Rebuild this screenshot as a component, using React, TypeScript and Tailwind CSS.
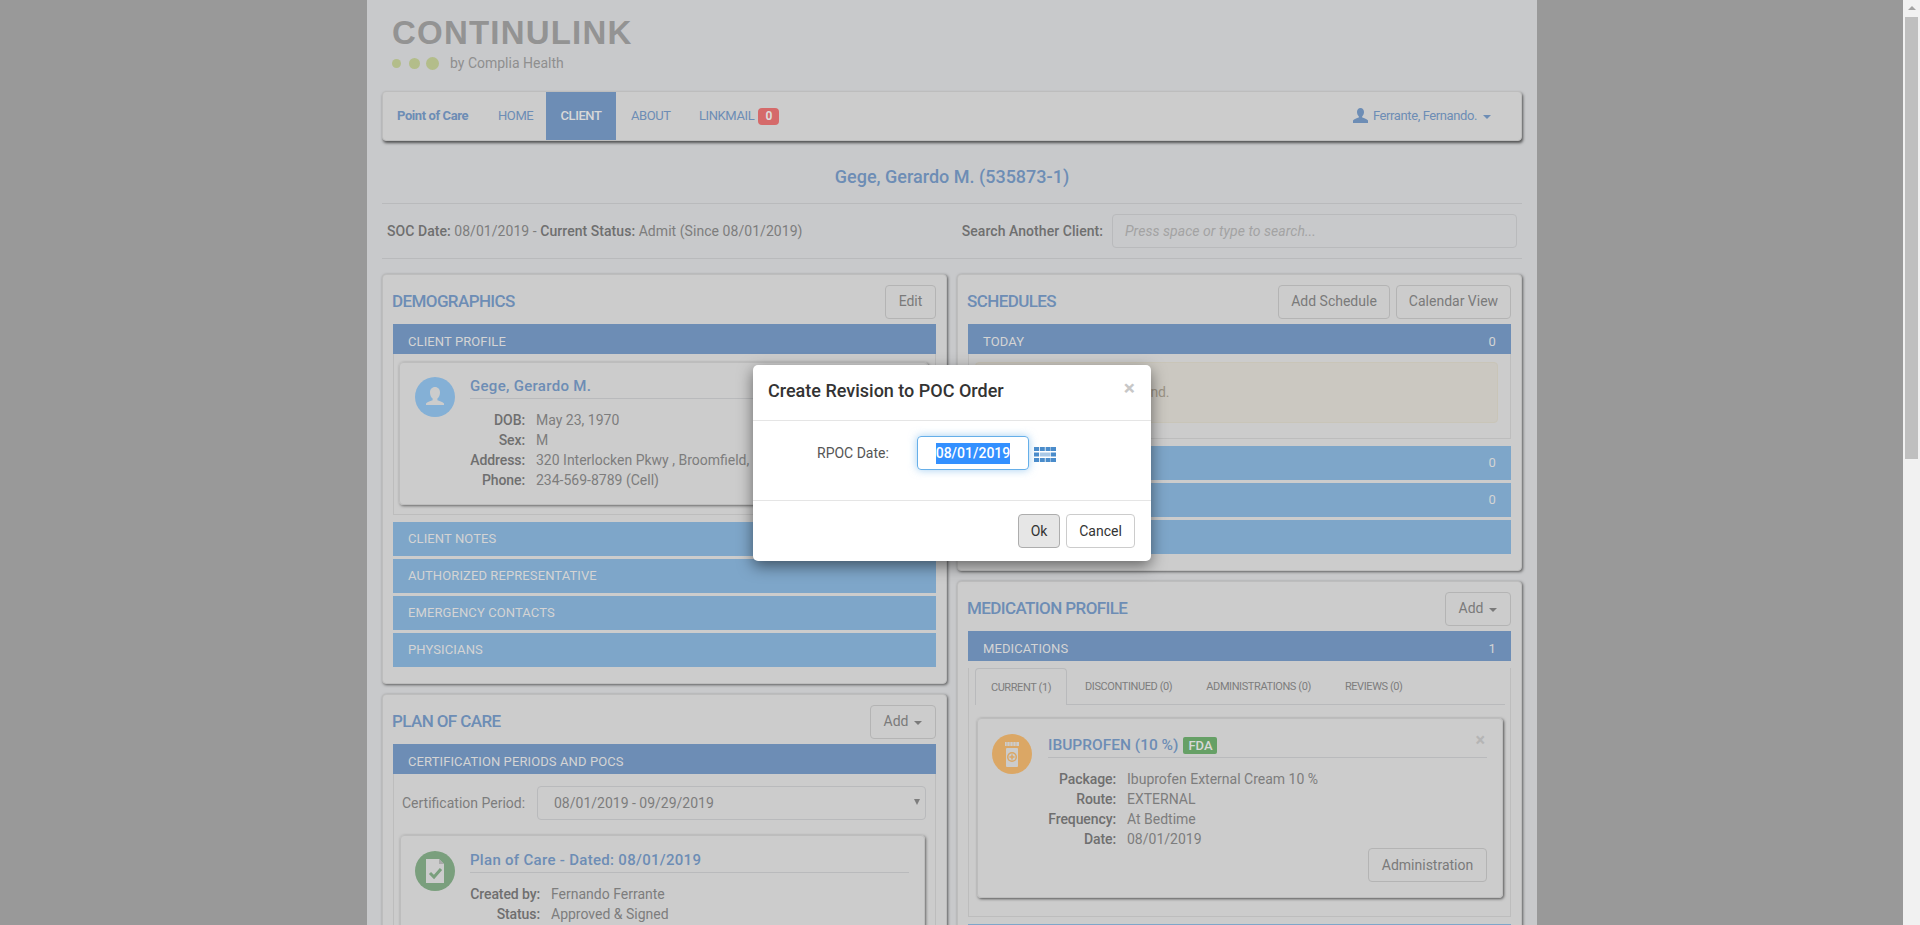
import type { ReactNode } from 'react';

const font = { fontFamily: 'Roboto, "Liberation Sans", sans-serif' };

function Panel({ title, actions, children, className = '' }: { title: string; actions: ReactNode; children: ReactNode; className?: string }) {
  return (
    <section className={`rounded-[4px] border border-[#bdbdbd] bg-[#cccccc] px-[10px] shadow-[1px_1px_3px_rgba(0,0,0,0.55)] ${className}`}>
      <div className="flex h-[49px] items-center justify-between pt-[4px]">
        <h2 className="-ml-px text-[17px] font-medium tracking-[-0.6px] text-[#6d8db5]">{title}</h2>
        <div className="flex gap-[6px]">{actions}</div>
      </div>
      {children}
    </section>
  );
}

function Btn({ children, caret, className = '' }: { children: ReactNode; caret?: boolean; className?: string }) {
  return (
    <div className={`flex h-[34px] items-center justify-center gap-[6px] rounded-[4px] border border-[#b4b4b4] text-[14px] text-[#7a7a7a] ${className}`}>
      {children}
      {caret && <span className="mt-[2px] h-0 w-0 border-x-[4px] border-t-[4px] border-x-transparent border-t-[#7a7a7a]" />}
    </div>
  );
}

function Bar({ label, count, light }: { label: string; count?: number; light?: boolean }) {
  return (
    <div className={`flex items-center justify-between px-[15px] text-[13px] tracking-[0.1px] text-[#d4d4d4] ${light ? 'h-[34px] bg-[#7ea6c9]' : 'h-[30px] bg-[#6d8db5] pt-[5px]'}`}>
      <span>{label}</span>
      {count !== undefined && <span>{count}</span>}
    </div>
  );
}

function Rows({ rows, labelWidth }: { rows: [string, string][]; labelWidth: string }) {
  return (
    <div className="mt-[11px] text-[14px] leading-[20px]">
      {rows.map(([k, v]) => (
        <div key={k} className="flex gap-[11px]">
          <span className={`${labelWidth} shrink-0 whitespace-nowrap text-right font-medium tracking-[-0.1px] text-[#6f6f6f]`}>{k}</span>
          <span className="whitespace-nowrap text-[#7d7d7d]">{v}</span>
        </div>
      ))}
    </div>
  );
}

function Circle({ color, children }: { color: string; children: ReactNode }) {
  return <div className={`flex h-[40px] w-[40px] shrink-0 items-center justify-center rounded-full ${color}`}>{children}</div>;
}

function CardTitle({ children }: { children: ReactNode }) {
  return <div className="h-[22px] border-b border-[#b9babc] text-[15px] font-medium leading-[18px] tracking-[0.3px] text-[#6d8db5]">{children}</div>;
}

export default function App() {
  return (
    <div className="flex h-screen overflow-hidden bg-[#999999]" style={font}>
      <div className="min-w-0 flex-1">
        <div className="ml-[367px] h-[925px] w-[1170px] overflow-hidden bg-[#c8c9cb] px-[15px]">
          {/* Logo */}
          <div className="h-[91px] pl-[10px] pt-[14px]">
            <div className="text-[33px] font-bold leading-[38px] tracking-[1.2px] text-[#939393]" style={{ fontFamily: '"Liberation Sans", Arial, sans-serif' }}>CONTINULINK</div>
            <div className="mt-[2px] flex h-[18px] items-center">
              <span className="h-[9px] w-[9px] rounded-full bg-[#b3bd8a]" />
              <span className="ml-[8px] h-[11px] w-[11px] rounded-full bg-[#b3bd8a]" />
              <span className="ml-[6px] h-[13px] w-[13px] rounded-full bg-[#b3bd8a]" />
              <span className="ml-[11px] text-[14px] leading-[18px] text-[#8f8f8f]">by Complia Health</span>
            </div>
          </div>

          {/* Nav */}
          <nav className="flex h-[50px] items-center rounded-[4px] border border-[#bdbdbd] bg-[#cccccc] pl-[14px] text-[13px] tracking-[-0.4px] text-[#6d8db5] shadow-[1px_2px_3px_rgba(0,0,0,0.6)]">
            <span className="w-[101px] font-bold">Point of Care</span>
            <span className="w-[48px]">HOME</span>
            <div className="flex h-full w-[70px] items-center justify-center bg-[#6d8db5] font-medium text-[#d8d8d8]">CLIENT</div>
            <span className="ml-[15px] w-[68px]">ABOUT</span>
            <span>LINKMAIL</span>
            <span className="ml-[4px] flex h-[17px] w-[21px] items-center justify-center rounded-[4px] bg-[#d56a6a] text-[12px] font-bold text-[#dcdcdc]">0</span>
            <div className="ml-auto mr-[30px] flex items-center">
              <svg width="15" height="16" viewBox="0 0 15 16" fill="#6d8db5" className="mr-[5px]">
                <path d="M7.500 0c2.200 0 3.500 1.700 3.500 4 0 1.800-.7 3.400-1.800 4.300v1.300c2 .7 4.800 1.500 5.800 2.800V15H0v-2.600c1-1.300 3.800-2.100 5.800-2.800V8.300C4.700 7.400 4 5.800 4 4c0-2.300 1.300-4 3.500-4z" />
              </svg>
              <span>Ferrante, Fernando.</span>
              <span className="ml-[6px] mt-[2px] h-0 w-0 border-x-[4px] border-t-[4px] border-x-transparent border-t-[#6d8db5]" />
            </div>
          </nav>

          {/* Client title */}
          <h1 className="flex h-[63px] items-center justify-center border-b border-[#b9babc] pt-[9px] text-[18px] font-medium text-[#6d8db5]">Gege, Gerardo M. (535873-1)</h1>
          <div className="flex h-[55px] items-center border-b border-[#b9babc] px-[5px] text-[14px] tracking-[0.05px] text-[#7d7d7d]">
            <span><b className="font-medium text-[#6f6f6f]">SOC Date:</b> 08/01/2019 - <b className="font-medium text-[#6f6f6f]">Current Status:</b> Admit (Since 08/01/2019)</span>
            <span className="ml-auto font-medium text-[#6f6f6f]">Search Another Client:</span>
            <div className="ml-[9px] flex h-[34px] w-[405px] items-center rounded-[4px] border border-[#b9babc] pl-[12px] text-[14px] italic text-[#a3a3a3]">Press space or type to search...</div>
          </div>

          <div className="mt-[15px] grid grid-cols-[565px_565px] gap-x-[10px]">
            {/* Left column */}
            <div className="flex flex-col gap-[10px]">
              <Panel title="DEMOGRAPHICS" actions={<Btn className="w-[51px]">Edit</Btn>}>
                <Bar label="CLIENT PROFILE" />
                <div className="h-[161px] border border-t-0 border-[#bdbdbd] pl-[5px] pr-[7px] pt-[8px]">
                  <div className="flex h-[143px] rounded-[4px] border border-[#bdbdbd] px-[15px] pt-[14px] shadow-[1px_1px_3px_rgba(0,0,0,0.5)]">
                    <Circle color="bg-[#84b0d6]">
                      <svg width="26" height="26" viewBox="0 0 26 26" fill="#cccccc">
                        <path d="M13 3c3 0 5 2.300 5 5.500 0 2.500-1 4.800-2.600 6v1.800c2.800 1 5.600 2 6.600 3.200v1.500H4v-1.500c1-1.200 3.800-2.200 6.600-3.200v-1.800C9 13.300 8 11 8 8.500 8 5.300 10 3 13 3z" />
                      </svg>
                    </Circle>
                    <div className="ml-[15px] flex-1">
                      <CardTitle>Gege, Gerardo M.</CardTitle>
                      <Rows labelWidth="w-[55px]" rows={[['DOB:', 'May 23, 1970'], ['Sex:', 'M'], ['Address:', '320 Interlocken Pkwy , Broomfield, CO'], ['Phone:', '234-569-8789 (Cell)']]} />
                    </div>
                  </div>
                </div>
                <div className="mt-[7px] flex flex-col gap-[3px] pb-[16px]">
                  <Bar light label="CLIENT NOTES" />
                  <Bar light label="AUTHORIZED REPRESENTATIVE" />
                  <Bar light label="EMERGENCY CONTACTS" />
                  <Bar light label="PHYSICIANS" />
                </div>
              </Panel>

              <Panel title="PLAN OF CARE" actions={<Btn caret className="w-[66px]">Add</Btn>} className="h-[400px]">
                <Bar label="CERTIFICATION PERIODS AND POCS" />
                <div className="h-[300px] border border-t-0 border-[#bdbdbd] px-[5px]">
                  <div className="flex items-center pl-[3px] pr-[4px] pt-[12px] text-[14px] text-[#7d7d7d]">
                    <span className="w-[135px] whitespace-nowrap">Certification Period:</span>
                    <div className="relative flex h-[34px] flex-1 items-center rounded-[4px] border border-[#b9babc] pl-[16px]">
                      08/01/2019 - 09/29/2019
                      <span className="absolute right-[5px] top-[12px] h-0 w-0 border-x-[3px] border-t-[6px] border-x-transparent border-t-[#7d7d7d]" />
                    </div>
                  </div>
                  <div className="ml-px mt-[15px] flex h-[200px] w-[525px] rounded-[4px] border border-[#bdbdbd] pl-[14px] pr-[15px] pt-[15px] shadow-[1px_1px_3px_rgba(0,0,0,0.5)]">
                    <Circle color="bg-[#7a9f7d]">
                      <svg width="22" height="26" viewBox="0 0 22 26">
                        <path d="M2 1h13l5 5v19H2z" fill="#cccccc" />
                        <path d="M15 1v5h5z" fill="#a9a9a9" />
                        <path d="M6 15l4 4 7-8" fill="none" stroke="#7a9f7d" strokeWidth="3" />
                      </svg>
                    </Circle>
                    <div className="ml-[15px] flex-1">
                      <CardTitle>Plan of Care - Dated: 08/01/2019</CardTitle>
                      <Rows labelWidth="w-[70px]" rows={[['Created by:', 'Fernando Ferrante'], ['Status:', 'Approved & Signed']]} />
                    </div>
                  </div>
                </div>
              </Panel>
            </div>

            {/* Right column */}
            <div className="flex flex-col gap-[10px]">
              <Panel title="SCHEDULES" actions={<><Btn className="w-[112px]">Add Schedule</Btn><Btn className="w-[115px]">Calendar View</Btn></>}>
                <Bar label="TODAY" count={0} />
                <div className="h-[85px] border border-t-0 border-[#bdbdbd] pl-[6px] pr-[12px] pt-[8px]">
                  <div className="flex h-[61px] items-center rounded-[4px] border border-[#c9c5b8] bg-[#cbc8c1] pl-[14px] text-[14px] tracking-[-0.2px] text-[#9c9486]">No appointments were found.</div>
                </div>
                <div className="mt-[7px] flex flex-col gap-[3px] pb-[16px]">
                  <Bar light label="UPCOMING" count={0} />
                  <Bar light label="PAST" count={0} />
                  <Bar light label="VISITS" />
                </div>
              </Panel>

              <Panel title="MEDICATION PROFILE" actions={<Btn caret className="w-[66px]">Add</Btn>} className="h-[400px]">
                <Bar label="MEDICATIONS" count={1} />
                <div className="h-[249px] border border-t-0 border-[#bdbdbd] px-[5px]">
                  <div className="ml-px mt-[7px] flex h-[37px] items-center border-b border-[#b9babc] pt-[2px] text-[11px] tracking-[-0.4px] text-[#7d7d7d]">
                    <div className="-mb-px -mt-[2px] flex h-[37px] w-[92px] items-center justify-center rounded-t-[4px] border border-b-0 border-[#b9babc] bg-[#cccccc] pt-[2px]">CURRENT (1)</div>
                    <span className="ml-[18px]">DISCONTINUED (0)</span>
                    <span className="ml-[34px]">ADMINISTRATIONS (0)</span>
                    <span className="ml-[34px]">REVIEWS (0)</span>
                  </div>
                  <div className="relative ml-[3px] mt-[13px] flex h-[180px] w-[526px] rounded-[4px] border border-[#bdbdbd] pl-[14px] pr-[15px] pt-[15px] shadow-[1px_1px_3px_rgba(0,0,0,0.6)]">
                    <span className="absolute right-[17px] top-[9px] text-[18px] font-bold leading-[24px] text-[#b5b5b5]">×</span>
                    <Circle color="bg-[#dba765]">
                      <svg width="40" height="40" viewBox="0 0 40 40">
                        <rect x="13" y="8" width="14" height="4" fill="#cccccc" />
                        <path d="M15 8v4M18 8v4M21 8v4M24 8v4" stroke="#dba765" strokeWidth="0.6" />
                        <rect x="14" y="14" width="12" height="19" rx="1" fill="#cccccc" />
                        <circle cx="20" cy="23" r="5" fill="#dba765" />
                        <circle cx="20" cy="23" r="3.500" fill="#cccccc" />
                        <path d="M20 20.500v5M17.500 23h5" stroke="#dba765" strokeWidth="1.500" />
                      </svg>
                    </Circle>
                    <div className="ml-[16px] flex-1">
                      <div className="flex h-[24px] items-center gap-[5px] border-b border-[#b9babc] text-[15.500px] font-medium text-[#6d8db5]">
                        IBUPROFEN (10 %)
                        <span className="flex h-[17px] w-[34px] items-center justify-center rounded-[2px] bg-[#66a066] text-[13px] font-medium text-[#d8d8d8]">FDA</span>
                      </div>
                      <Rows labelWidth="w-[68px]" rows={[['Package:', 'Ibuprofen External Cream 10 %'], ['Route:', 'EXTERNAL'], ['Frequency:', 'At Bedtime'], ['Date:', '08/01/2019']]} />
                      <div className="-mt-px flex justify-end">
                        <Btn className="w-[119px]">Administration</Btn>
                      </div>
                    </div>
                  </div>
                </div>
                <div className="mt-[7px]"><Bar light label="ALLERGIES" /></div>
              </Panel>
            </div>
          </div>
        </div>
      </div>

      {/* Scrollbar */}
      <div className="flex w-[17px] shrink-0 flex-col items-center bg-[#f1f1f1]">
        <span className="mt-[6px] h-0 w-0 border-x-[4px] border-b-[4px] border-x-transparent border-b-[#a3a3a3]" />
        <div className="mt-[7px] h-[442px] w-[13px] bg-[#bfbfbf]" />
      </div>

      {/* Modal */}
      <div className="absolute left-[753px] top-[365px] w-[398px] rounded-[5px] bg-white text-[14px] text-[#555555] shadow-[0_5px_15px_rgba(0,0,0,0.5)]">
        <div className="flex h-[56px] items-center justify-between border-b border-[#e5e5e5] pl-[15px] pr-[16px]">
          <h3 className="-mt-[4px] text-[18px] font-medium text-[#333333]">Create Revision to POC Order</h3>
          <span className="-mt-[8px] text-[21px] font-bold leading-none text-[#c7c7c7]">×</span>
        </div>
        <div className="flex h-[80px] items-start border-b border-[#e5e5e5] pl-[64px] pt-[15px]">
          <span className="mt-[7px] w-[100px]">RPOC Date:</span>
          <div className="flex h-[34px] w-[112px] items-center justify-center rounded-[4px] border border-[#66afe9] shadow-[0_0_8px_rgba(102,175,233,0.6)]">
            <span className="bg-[#3390ff] font-medium text-white">08/01/2019</span>
          </div>
          <svg width="22" height="15" viewBox="0 0 22 15" className="ml-[5px] mt-[11px]" fill="#4a8ccb">
            <path d="M0 0h5v4H0zM5.800 0h5v4h-5zM11.600 0h5v4h-5zM17 0h5v4h-5z" />
            <path d="M0 5.500h5v4H0zM17 5.500h5v4h-5z" />
            <path d="M5.800 5.500h10.800v4H5.800z" fill="#a9c8e6" />
            <path d="M0 11h5v4H0zM5.800 11h5v4h-5zM11.600 11h5v4h-5zM17 11h5v4h-5z" />
          </svg>
        </div>
        <div className="flex h-[60px] items-start justify-end gap-[6px] pr-[16px] pt-[13px]">
          <div className="flex h-[34px] w-[42px] items-center justify-center rounded-[4px] border border-[#adadad] bg-[#e6e6e6] text-[#333333]">Ok</div>
          <div className="flex h-[34px] w-[69px] items-center justify-center rounded-[4px] border border-[#cccccc] text-[#333333]">Cancel</div>
        </div>
      </div>
    </div>
  );
}
